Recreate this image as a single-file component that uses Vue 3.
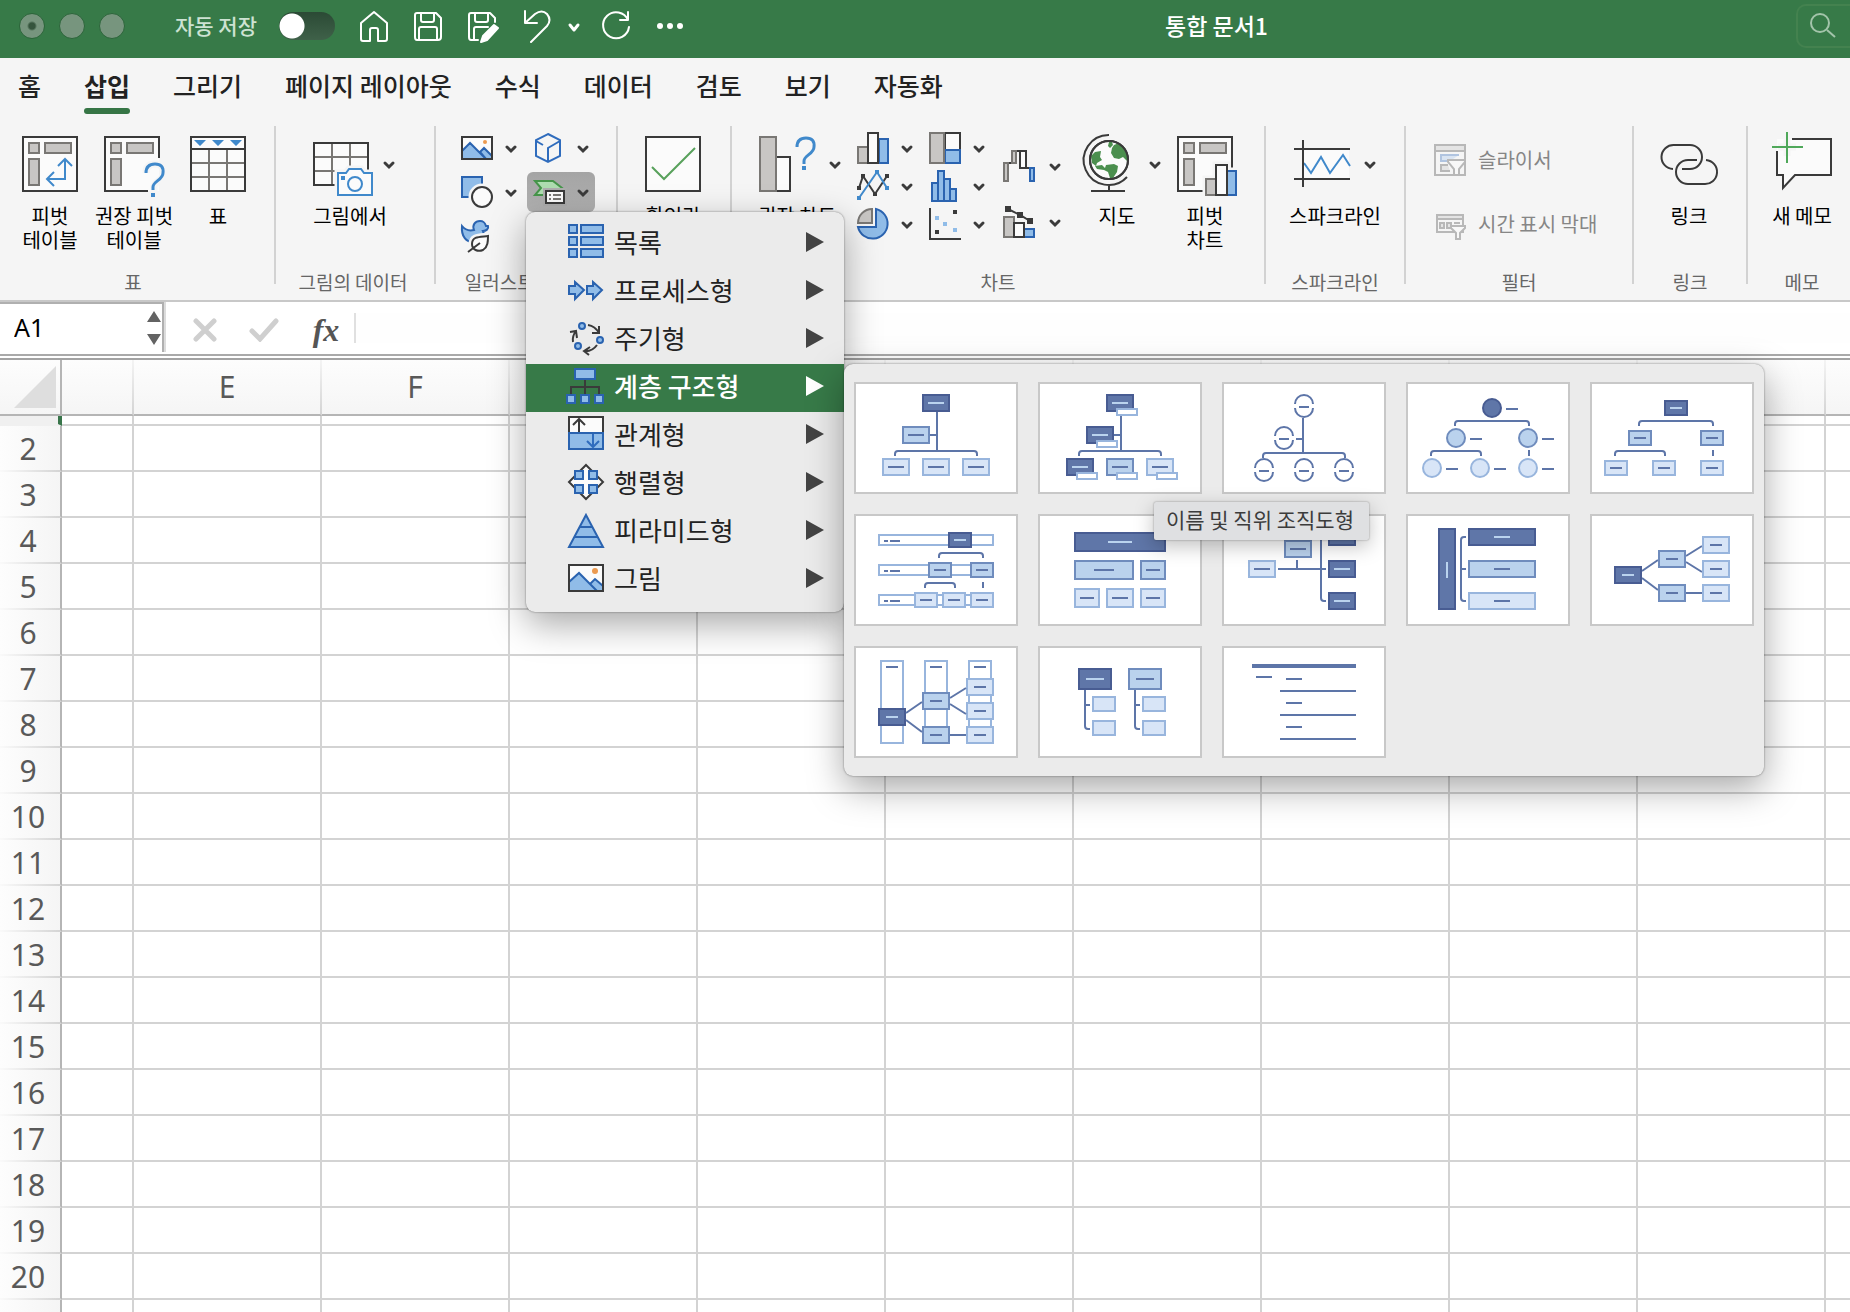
<script setup>
import { ref } from 'vue'

const autosave = ref(false)
const cellName = ref('A1')
const formula = ref('')

const tabs = ['홈', '삽입', '그리기', '페이지 레이아웃', '수식', '데이터', '검토', '보기', '자동화']
const columns = ['E', 'F', 'G', 'H', 'I', 'J', 'K', 'L', 'M', 'N']
const rows = Array.from({ length: 20 }, (_, i) => i + 2)

const menu = [
  { id: 'list', label: '목록' },
  { id: 'process', label: '프로세스형' },
  { id: 'cycle', label: '주기형' },
  { id: 'hierarchy', label: '계층 구조형', active: true },
  { id: 'relation', label: '관계형' },
  { id: 'matrix', label: '행렬형' },
  { id: 'pyramid', label: '피라미드형' },
  { id: 'picture', label: '그림' },
]

// Box: [x, y, width, height, tone, dash length]; circle: [cx, cy, tone]
const arc = (x, y) => `M${x - 9} ${y - 2}A9 9 0 0 1 ${x + 9} ${y - 2}M${x - 9} ${y + 2}A9 9 0 0 0 ${x + 9} ${y + 2}M${x - 5} ${y + 1}h10`
const bracket = (x1, x2, y) => `M${x1} ${y + 5}v-2q0-3 3-3H${x2 - 3}q3 0 3 3v2`

const layouts = [
  {
    name: '조직도형',
    lines: 'M81 28V66M74 51H81' + bracket(39, 121, 67),
    boxes: [[66, 10, 28, 18, 'd', 16], [46, 42, 28, 18, 'm', 16], [26, 74, 28, 18, 'l', 16], [66, 74, 28, 18, 'l', 16], [106, 74, 28, 18, 'l', 16]],
  },
  {
    name: '이름 및 직위 조직도형',
    lines: 'M81 28V66M74 51H81' + bracket(39, 121, 67),
    boxes: [
      [66, 10, 28, 18, 'd', 16], [46, 42, 28, 18, 'd', 16], [26, 74, 28, 18, 'd', 16], [66, 74, 28, 18, 'm', 16], [106, 74, 28, 18, 'l', 16],
      [76, 24, 22, 8, 'w', 0], [56, 56, 22, 8, 'w', 0], [36, 88, 22, 8, 'w', 0], [76, 88, 22, 8, 'w', 0], [116, 88, 22, 8, 'w', 0],
    ],
  },
  {
    name: '반원 조직도형',
    lines: 'M79 34V69M72 55H79' + bracket(39, 121, 69) + arc(80, 22) + arc(60, 54) + arc(40, 86) + arc(80, 86) + arc(120, 86),
  },
  {
    name: '원형 그림 계층 구조형',
    lines: bracket(47, 121, 37) + bracket(23, 73, 67) + 'M121 66v6M98 25h12M62 55h12M134 55h12M38 85h12M86 85h12M134 85h12',
    circles: [[84, 24, 'd'], [48, 54, 'm'], [120, 54, 'm'], [24, 84, 'l'], [72, 84, 'l'], [120, 84, 'l']],
  },
  {
    name: '계층 구조형',
    lines: bracket(47, 121, 37) + bracket(23, 73, 67) + 'M121 66v6',
    boxes: [[72, 16, 24, 16, 'd', 12], [36, 46, 24, 16, 'm', 12], [108, 46, 24, 16, 'm', 12], [12, 76, 24, 16, 'l', 12], [60, 76, 24, 16, 'l', 12], [108, 76, 24, 16, 'l', 12]],
  },
  {
    name: '레이블 계층 구조형',
    boxes: [
      [22, 18, 116, 12, 'w', 0], [22, 48, 116, 12, 'w', 0], [22, 78, 116, 12, 'w', 0],
      [92, 16, 24, 16, 'd', 12], [72, 46, 24, 16, 'm', 12], [114, 46, 24, 16, 'm', 12], [58, 76, 24, 16, 'l', 12], [86, 76, 24, 16, 'l', 12], [114, 76, 24, 16, 'l', 12],
    ],
    over: 'M28 25h4M34 25h10M28 55h4M34 55h10M28 85h4M34 85h10' + bracket(83, 127, 37) + bracket(69, 99, 67) + 'M127 66v6',
  },
  {
    name: '표 계층 구조형',
    boxes: [[34, 16, 92, 20, 'd', 24], [34, 44, 60, 20, 'm', 20], [100, 44, 26, 20, 'm', 14], [34, 72, 26, 20, 'l', 14], [66, 72, 28, 20, 'l', 16], [100, 72, 26, 20, 'l', 14]],
  },
  {
    name: '가로 조직도형',
    lines: 'M54 53H102M73 44V53M102 21h-2q-3 0-3 3V82q0 3 3 3h2',
    boxes: [[60, 24, 28, 18, 'm', 16], [24, 44, 28, 18, 'l', 16], [104, 12, 28, 18, 'd', 16], [104, 44, 28, 18, 'd', 16], [104, 76, 28, 18, 'd', 16]],
  },
  {
    name: '가로 다단계 계층 구조형',
    lines: 'M58 21h-2q-3 0-3 3V82q0 3 3 3h2M53 53h5',
    boxes: [[30, 12, 18, 82, 'd', 0], [60, 12, 68, 18, 'd', 16], [60, 44, 68, 18, 'm', 16], [60, 76, 68, 18, 'l', 16]],
    light: 'M39 46v16',
  },
  {
    name: '가로 계층 구조형',
    lines: 'M50 55L66 44M50 62L66 74M94 40L110 30M94 46L110 56M94 77H110',
    boxes: [[22, 50, 28, 18, 'd', 12], [66, 34, 28, 18, 'm', 12], [66, 68, 28, 18, 'm', 12], [110, 20, 28, 18, 'l', 12], [110, 44, 28, 18, 'l', 12], [110, 68, 28, 18, 'l', 12]],
  },
  {
    name: '가로 레이블 계층 구조형',
    boxes: [
      [24, 12, 24, 84, 'w', 0], [68, 12, 24, 84, 'w', 0], [112, 12, 24, 84, 'w', 0],
      [22, 60, 28, 18, 'd', 12], [66, 44, 28, 18, 'm', 12], [66, 78, 28, 18, 'm', 12], [110, 30, 28, 18, 'l', 12], [110, 54, 28, 18, 'l', 12], [110, 78, 28, 18, 'l', 12],
    ],
    over: 'M30 19h12M74 19h12M118 19h12M50 65L66 54M50 72L66 84M94 50L110 40M94 56L110 66M94 87H110',
  },
  {
    name: '계층 구조 목록형',
    lines: 'M45 42V78q0 3 3 3h2M45 57h5M95 42V78q0 3 3 3h2M95 57h5',
    boxes: [[38, 20, 34, 22, 'd', 18], [88, 20, 34, 22, 'm', 18], [52, 48, 24, 16, 'l', 0], [52, 72, 24, 16, 'l', 0], [102, 48, 24, 16, 'l', 0], [102, 72, 24, 16, 'l', 0]],
  },
  {
    name: '선 목록형',
    lines: 'M28 17H132M28 19H132M32 29H48M62 31H78M62 55H78M62 79H78M56 43H132M56 67H132M56 91H132',
  },
]
</script>

<template>
  <div class="window">
    <header class="titlebar">
      <div class="lights">
        <span class="light edited"></span><span class="light"></span><span class="light"></span>
      </div>
      <label class="autosave" for="autosave">자동 저장</label>
      <input id="autosave" v-model="autosave" class="toggle" type="checkbox" role="switch" />
      <nav class="quick">
        <button aria-label="홈"><svg width="32" height="34" viewBox="0 0 32 34"><path d="M3 14L16 3 29 14V30q0 2-2 2H20V21q0-2-2-2h-4q-2 0-2 2V32H5q-2 0-2-2Z" /></svg></button>
        <button aria-label="저장"><svg width="32" height="34" viewBox="0 0 32 34"><path d="M5 4H24L29 9V28q0 3-3 3H5q-2 0-2-3V6q0-2 2-2ZM9 4v7q0 2 2 2h9q2 0 2-2V4M7 31V20q0-2 2-2h14q2 0 2 2V31" /></svg></button>
        <button aria-label="다른 이름으로 저장"><svg width="34" height="34" viewBox="0 0 34 34"><path d="M12 31H5q-2 0-2-3V6q0-2 2-2H24L29 9v4M9 4v7q0 2 2 2h9q2 0 2-2V4M8 31V20q0-2 2-2h12" /><path class="solid" d="M28 16l4 3-11 12-6 2 2-6Z" /></svg></button>
        <button aria-label="실행 취소"><svg width="32" height="34" viewBox="0 0 32 34"><path d="M3 2V14H15M3 14L13 5q7-5 12 0 5 6 0 12L9 33" /></svg></button>
        <button class="narrow" aria-label="실행 취소 목록"><svg width="16" height="34" viewBox="0 0 16 34"><path class="thick" d="M4 16l4 5 4-5" /></svg></button>
        <button aria-label="다시 실행"><svg width="32" height="34" viewBox="0 0 32 34"><path d="M28 11A13 13 0 1 0 29 18M28 3V11H20" /></svg></button>
        <button aria-label="더 보기"><svg width="32" height="34" viewBox="0 0 32 34"><g class="dots"><circle cx="6" cy="17" r="3" /><circle cx="16" cy="17" r="3" /><circle cx="26" cy="17" r="3" /></g></svg></button>
      </nav>
      <h1 class="doc-title">통합 문서1</h1>
      <button class="search" aria-label="검색"><svg width="30" height="30" viewBox="0 0 30 30"><circle cx="12" cy="12" r="9" /><path d="M19 19L27 26" /></svg></button>
    </header>

    <nav class="tabs">
      <a v-for="t in tabs" :key="t" href="#" :class="{ current: t === '삽입' }">{{ t }}</a>
    </nav>

    <section class="ribbon">
      <div class="group tables">
        <div class="tools">
          <button class="big">
            <svg width="68" height="72" viewBox="0 0 68 72"><rect class="w" x="7" y="7" width="54" height="54" /><rect class="g" x="13" y="13" width="10" height="10" /><rect class="g" x="29" y="13" width="26" height="10" /><rect class="g" x="13" y="29" width="10" height="26" /><path class="bl" d="M31 49H49V29M42 36l7-7 7 7M38 42l-7 7 7 7" /></svg>
            <span>피벗<br />테이블</span>
          </button>
          <button class="big">
            <svg width="68" height="72" viewBox="0 0 68 72"><path class="fillw" d="M5 7H59V61H5Z" /><path class="k" d="M59 28V7H5V61H48" /><rect class="g" x="11" y="13" width="10" height="10" /><rect class="g" x="27" y="13" width="26" height="10" /><rect class="g" x="11" y="29" width="10" height="26" /><path class="halo" d="M46 43q0-9 9-9t9 9c0 7-10 8-10 14v9" /><path class="bl q" d="M46 43q0-9 9-9t8 9c0 7-10 8-10 14v3" /><rect class="bs" x="51" y="63" width="4" height="4" /></svg>
            <span>권장 피벗<br />테이블</span>
          </button>
          <button class="big">
            <svg width="68" height="72" viewBox="0 0 68 72"><rect class="w" x="7" y="7" width="54" height="54" /><path class="gk" d="M25 19V61M43 19V61M7 33H61M7 47H61" /><path class="k" d="M7 19H61M7 7H61V61H7Z" /><path class="bs" d="M10 10h12l-6 6ZM28 10h12l-6 6ZM46 10h12l-6 6Z" /></svg>
            <span>표</span>
          </button>
        </div>
        <p>표</p>
      </div>

      <div class="group picdata">
        <div class="tools">
          <button class="big wide">
            <svg width="92" height="72" viewBox="0 0 92 72"><path class="fillw" d="M10 13H64V55H10Z" /><path class="gk" d="M28 13V55M46 13V36M10 27H64M10 41H31" /><path class="k" d="M64 40V13H10V55H31" /><path class="halo" d="M34 43H42L45 39H57L60 43H68V65H34Z" /><path class="bl fw" d="M34 43H42L45 39H57L60 43H68V65H34Z" /><circle class="bl" cx="51" cy="54" r="7" /><rect class="bs" x="37" y="46" width="4" height="4" /><path class="chev" d="M81 33l4 4 4-4" /></svg>
            <span>그림에서</span>
          </button>
        </div>
        <p>그림의 데이터</p>
      </div>

      <div class="group illus">
        <div class="tools pairs">
          <button class="small" aria-label="그림"><svg width="68" height="40" viewBox="0 0 68 40"><rect class="w" x="7" y="9" width="30" height="22" /><path class="b" d="M7 30V23L15 15 31 31H7M25 24l4-4 8 8V31H31Z" /><rect class="k" x="7" y="9" width="30" height="22" /><circle class="sun" cx="30" cy="14" r="2" /><path class="chev" d="M52 19l4 4 4-4" /></svg></button>
          <button class="small" aria-label="3D 모델"><svg width="68" height="40" viewBox="0 0 68 40"><path class="cube" d="M21 6L33 12V28L21 34 9 28V12ZM9 13l7 4M21 34V20L33 13" /><path class="chev" d="M52 19l4 4 4-4" /></svg></button>
          <button class="small" aria-label="도형"><svg width="68" height="40" viewBox="0 0 68 40"><rect class="b" x="7" y="5" width="20" height="20" /><circle class="halo" cx="27" cy="25" r="10" /><circle class="w" cx="27" cy="25" r="10" /><path class="chev" d="M52 19l4 4 4-4" /></svg></button>
          <button class="small pressed" aria-label="SmartArt" aria-expanded="true"><svg width="68" height="40" viewBox="0 0 68 40"><path class="green" d="M8 9H26L35 16 30 23H8L14 16Z" /><rect class="card-gap" x="16" y="16" width="24" height="18" /><rect class="w" x="19" y="19" width="18" height="12" /><path class="gk" d="M22 23h2M26 23h8M22 27h2M26 27h8" /><path class="chev" d="M52 19l4 4 4-4" /></svg></button>
          <button class="small" aria-label="아이콘"><svg width="68" height="40" viewBox="0 0 68 40"><path class="b" d="M7 10c4 5 8 5 12 4-2-5 1-9 6-9 4 0 5 2 6 5h2c1 3-2 5-5 5 2 4-1 10-8 11-9 1-14-6-13-16Z" /><path class="halo" d="M33 20C25 21 17 20 17 28c0 6 6 8 11 6 5-3 5-9 5-14Z" /><path class="w" d="M33 20C25 21 17 20 17 28c0 6 6 8 11 6 5-3 5-9 5-14ZM13 36L25 27" /></svg></button>
        </div>
        <p>일러스트레이션</p>
      </div>

      <div class="group controls">
        <div class="tools">
          <button class="big">
            <svg width="68" height="72" viewBox="0 0 68 72"><rect class="w" x="7" y="7" width="54" height="54" /><path class="gl" d="M13 37L25 49 56 18" /></svg>
            <span>확인란</span>
          </button>
        </div>
      </div>

      <div class="group charts">
        <div class="tools">
          <button class="big wide">
            <svg width="92" height="72" viewBox="0 0 92 72"><rect class="w" x="25" y="27" width="14" height="34" /><rect class="g" x="9" y="7" width="16" height="54" /><path class="bl q" d="M46 17q0-9 9-9t8 9c0 7-10 8-10 14v3" /><rect class="bs" x="51" y="36" width="4" height="4" /><path class="chev" d="M80 33l4 4 4-4" /></svg>
            <span>권장 차트</span>
          </button>
          <div class="stack">
            <button aria-label="세로 막대형"><svg width="72" height="38" viewBox="0 0 72 38"><rect class="g" x="9" y="18" width="10" height="16" /><rect class="b" x="30" y="10" width="9" height="24" /><rect class="w" x="19" y="4" width="10" height="30" /><path class="chev" d="M54 18l4 4 4-4" /></svg></button>
            <button aria-label="꺾은선형"><svg width="72" height="38" viewBox="0 0 72 38"><path class="k" d="M10 21L14 9 26 27 38 9" /><path class="dk" d="M8 19h4v4H8ZM12 7h4v4h-4ZM24 25h4v4h-4ZM36 7h4v4h-4Z" /><path class="bl" d="M10 31L28 5 38 21" /><path class="bs" d="M8 29h4v4H8ZM26 3h4v4h-4ZM36 19h4v4h-4Z" /><path class="chev" d="M54 18l4 4 4-4" /></svg></button>
            <button aria-label="원형"><svg width="72" height="38" viewBox="0 0 72 38"><path class="b" d="M27 4A15 15 0 1 1 9 22H27Z" /><path class="g" d="M23 4V18H9A14 14 0 0 1 23 4Z" /><path class="chev" d="M54 18l4 4 4-4" /></svg></button>
          </div>
          <div class="stack">
            <button aria-label="계층 구조"><svg width="72" height="38" viewBox="0 0 72 38"><rect class="w" x="24" y="4" width="15" height="17" /><rect class="b" x="24" y="21" width="15" height="13" /><rect class="g" x="9" y="4" width="14" height="30" /><path class="chev" d="M54 18l4 4 4-4" /></svg></button>
            <button aria-label="통계"><svg width="72" height="38" viewBox="0 0 72 38"><path class="b" d="M11 34V16h6V34ZM17 34V4h6V34ZM23 34V12h6V34ZM29 34V22h6V34Z" /><path class="chev" d="M54 18l4 4 4-4" /></svg></button>
            <button aria-label="분산형"><svg width="72" height="38" viewBox="0 0 72 38"><path class="k" d="M9 3V34H40" /><path class="dk" d="M32 5h4v4h-4ZM14 25h4v4h-4Z" /><path class="lb" d="M14 11h4v4h-4ZM22 17h4v4h-4ZM32 23h4v4h-4Z" /><path class="chev" d="M54 18l4 4 4-4" /></svg></button>
          </div>
          <div class="stack loose">
            <button aria-label="폭포"><svg width="72" height="38" viewBox="0 0 72 38"><path class="k" d="M15 16h4M23 4h4M33 21h4" /><path class="g" d="M11 16h4V34h-4ZM19 4h4V16h-4Z" /><rect class="w" x="27" y="4" width="6" height="17" /><rect class="b" x="37" y="21" width="4" height="13" /><path class="chev" d="M58 18l4 4 4-4" /></svg></button>
            <button aria-label="콤보"><svg width="72" height="38" viewBox="0 0 72 38"><rect class="b" x="31" y="26" width="10" height="8" /><rect class="g" x="11" y="14" width="10" height="20" /><rect class="w" x="21" y="20" width="10" height="14" /><path class="k" d="M15 6L27 12 37 18" /><path class="dk" d="M12 3h6v6h-6ZM24 9h6v6h-6ZM34 15h6v6h-6Z" /><path class="chev" d="M58 18l4 4 4-4" /></svg></button>
          </div>
          <button class="big wide globe">
            <svg width="92" height="72" viewBox="0 0 92 72"><circle class="w" cx="38" cy="30" r="19" /><path class="land" d="M43 15l5-2 6 5 3 8-1 5-4-4-4 2-5-1-3-5 1-5ZM38 12h3l1 3-3 3-2-2ZM20 26l4-4 6-1-1 6 2 3-5 3-1 3-4-3ZM24 36l7-1 3 3 1-3 8-1 4 2-1 6-4 6-3 0-2-6-4-2-7-1Z" /><circle class="k" cx="38" cy="30" r="19" /><path class="k" d="M38 5A25 25 0 1 0 56 47M38 55V61M20 61H54" /><path class="chev" d="M80 33l4 4 4-4" /></svg>
            <span>지도</span>
          </button>
          <button class="big pchart">
            <svg width="68" height="72" viewBox="0 0 68 72"><path class="fillw" d="M7 7H61V61H7Z" /><path class="k" d="M61 38V7H7V61H32" /><rect class="g" x="13" y="13" width="10" height="10" /><rect class="g" x="29" y="13" width="26" height="10" /><rect class="g" x="13" y="29" width="10" height="26" /><path class="halo" d="M35 65V49H45V35H56V41H65V65Z" /><rect class="g" x="35" y="49" width="10" height="16" /><rect class="b" x="56" y="41" width="9" height="24" /><rect class="w" x="45" y="35" width="11" height="30" /></svg>
            <span>피벗<br />차트</span>
          </button>
        </div>
        <p>차트</p>
      </div>

      <div class="group spark">
        <div class="tools">
          <button class="big wide">
            <svg width="92" height="72" viewBox="0 0 92 72"><path class="fillw" d="M14 19H60V49H14Z" /><path class="bl" d="M15 33l7 10 10-16 9 16L54 25l7 11" /><path class="k" d="M14 10V57M5 19H61M5 49H61" /><path class="chev" d="M77 33l4 4 4-4" /></svg>
            <span>스파크라인</span>
          </button>
        </div>
        <p>스파크라인</p>
      </div>

      <div class="group filter">
        <div class="tools column">
          <button class="row" disabled><svg width="32" height="32" viewBox="0 0 32 32"><path class="dis" d="M1 1H31V31H1Z" /><path class="disf" d="M1 1H31V7H1Z" /><path class="disb" d="M25 11H7V17H16" /><path class="disf" d="M14 21H7V27H16" /><path class="disw" d="M14 16H31V18L25 25V31H20V25L14 18Z" /></svg><span>슬라이서</span></button>
          <button class="row" disabled><svg width="32" height="32" viewBox="0 0 32 32"><path class="dis" d="M3 7H29V24H3Z" /><path class="disf" d="M3 7H29V11H3Z" /><path class="disf" d="M6 15H10V20H6ZM13 15H17V20H13ZM20 15H26" /><path class="disw" d="M17 18H31V20L26 25V31H22V25L17 20Z" /></svg><span>시간 표시 막대</span></button>
        </div>
        <p>필터</p>
      </div>

      <div class="group link">
        <div class="tools">
          <button class="big">
            <svg width="68" height="72" viewBox="0 0 68 72"><path class="k" d="M18 39A12 12 0 0 1 19 15H35A12 12 0 0 1 35 39H27M42 30H33A12 12 0 0 0 33 54H49A12 12 0 0 0 51 30" /></svg>
            <span>링크</span>
          </button>
        </div>
        <p>링크</p>
      </div>

      <div class="group memo">
        <div class="tools">
          <button class="big">
            <svg width="68" height="72" viewBox="0 0 68 72"><path class="fillw" d="M9 9H63V45H27L15 58V45H9Z" /><path class="k" d="M24 9H63V45H27L15 58V45H9V21" /><path class="halo" d="M19 9V26M10 17H28" /><path class="plus" d="M19 2V33M4 17H35" /></svg>
            <span>새 메모</span>
          </button>
        </div>
        <p>메모</p>
      </div>
    </section>

    <section class="formula-bar">
      <div class="namebox">
        <input v-model="cellName" aria-label="이름 상자" />
        <button aria-label="이름 목록"><svg width="14" height="36" viewBox="0 0 14 36"><path d="M0 12L7 1l7 11ZM0 24H14L7 35Z" /></svg></button>
      </div>
      <button aria-label="취소"><svg width="24" height="24" viewBox="0 0 24 24"><path d="M3 3L21 21M21 3L3 21" /></svg></button>
      <button aria-label="입력"><svg width="30" height="24" viewBox="0 0 30 24"><path d="M3 13L11 21 27 3" /></svg></button>
      <button class="fx" aria-label="함수 삽입">fx</button>
      <input v-model="formula" class="formula" aria-label="수식 입력줄" />
    </section>

    <table class="sheet">
      <colgroup>
        <col class="c-head" /><col class="c-part" /><col v-for="c in columns" :key="c" />
      </colgroup>
      <thead>
        <tr>
          <th class="corner"><svg width="42" height="42" viewBox="0 0 42 42"><path d="M42 0V42H0Z" /></svg></th>
          <th></th>
          <th v-for="c in columns" :key="c" scope="col">{{ c }}</th>
        </tr>
      </thead>
      <tbody>
        <tr class="first"><th></th><td></td><td v-for="c in columns" :key="c"></td></tr>
        <tr v-for="r in rows" :key="r"><th scope="row">{{ r }}</th><td></td><td v-for="c in columns" :key="c"></td></tr>
      </tbody>
    </table>

    <div class="menu" role="menu">
      <button v-for="m in menu" :key="m.id" role="menuitem" :class="{ active: m.active }">
        <svg width="40" height="44" viewBox="0 -4 40 44">
          <path v-if="m.id === 'list'" class="b" d="M3 1h8v8H3ZM15 1H37V9H15ZM3 13h8v8H3ZM15 13H37v8H15ZM3 25h8v8H3ZM15 25H37v8H15Z" />
          <path v-if="m.id === 'process'" class="b" d="M3 14H9V10l9 8-9 9V22H3ZM21 14h6V10l9 8-9 9V22H21Z" />
          <g v-if="m.id === 'cycle'"><circle class="b" cx="16" cy="6" r="3" /><circle class="b" cx="34" cy="20" r="3" /><circle class="b" cx="12" cy="26" r="3" /><path class="k" d="M22 5q7 1 11 8M26 13h7V6M31 25q-5 7-13 6M24 27l-6 4 5 4M7 22q-1-6 3-11M4 12l6-1 1 7" /></g>
          <g v-if="m.id === 'hierarchy'"><path class="k" d="M19 12V26M5 26V19H33V26" /><path class="b" d="M9 1H29V11H9ZM1 27H9v8H1ZM15 27h8v8H15ZM29 27h8v8H29Z" /></g>
          <g v-if="m.id === 'relation'"><rect class="w" x="3" y="1" width="34" height="17" /><rect class="b" x="3" y="17" width="34" height="16" /><path class="k" d="M13 16V3M7 9l6-6 6 6" /><path class="cube" d="M27 18V31M21 25l6 6 6-6" /></g>
          <g v-if="m.id === 'matrix'"><path class="w" d="M20 1L37 18 20 35 3 18Z" /><path class="b" d="M9 7h8v8H9ZM23 7h8v8H23ZM9 21h8v8H9ZM23 21h8v8H23Z" /></g>
          <path v-if="m.id === 'pyramid'" class="b" d="M20 3L37 35H3ZM14 15H26M9 25H31" />
          <g v-if="m.id === 'picture'"><rect class="w" x="3" y="5" width="34" height="26" /><path class="b" d="M3 31V22L13 13 31 31ZM24 24l5-5 8 7V31H31Z" /><rect class="k" x="3" y="5" width="34" height="26" /><circle class="sun" cx="29" cy="11" r="3" /></g>
        </svg>
        <span>{{ m.label }}</span>
        <svg class="arrow" width="18" height="20" viewBox="0 0 18 20"><path d="M0 0L18 10 0 20Z" /></svg>
      </button>
    </div>

    <div class="gallery">
      <button v-for="l in layouts" :key="l.name" :aria-label="l.name">
        <svg width="160" height="108" viewBox="0 0 160 108">
          <path v-if="l.lines" class="conn" :d="l.lines" />
          <g v-for="(b, i) in l.boxes || []" :key="i" :class="'t-' + b[4]">
            <rect :x="b[0] + 1" :y="b[1] + 1" :width="b[2] - 2" :height="b[3] - 2" />
            <path v-if="b[5]" :d="`M${b[0] + (b[2] - b[5]) / 2} ${b[1] + b[3] / 2}h${b[5]}`" />
          </g>
          <g v-for="(c, i) in l.circles || []" :key="'c' + i" :class="'t-' + c[2]"><circle :cx="c[0]" :cy="c[1]" r="9" /></g>
          <path v-if="l.over" class="conn" :d="l.over" />
          <path v-if="l.light" class="conn light-line" :d="l.light" />
        </svg>
      </button>
    </div>

    <div class="tooltip" role="tooltip">이름 및 직위 조직도형</div>
  </div>
</template>

<style>
body {
  margin: 0;
  background: #fff;
}
</style>

<style scoped>
.window {
  position: relative;
  height: 100vh;
  overflow: hidden;
  font-family: 'Noto Sans CJK KR', 'Noto Sans', sans-serif;
  color: #222;
}
.window * {
  box-sizing: border-box;
}
button {
  margin: 0;
  padding: 0;
  border: 0;
  background: none;
  font: inherit;
  color: inherit;
}
svg {
  display: block;
  flex: none;
  fill: none;
}
input {
  font: inherit;
  border: 0;
  outline: 0;
}

/* Title bar */
.titlebar {
  display: flex;
  align-items: center;
  height: 58px;
  padding: 0 0 6px 19px;
  background: #377a48;
  color: #fff;
}
.lights {
  display: flex;
  gap: 14px;
}
.light {
  width: 26px;
  height: 26px;
  border: 1px solid #2c653a;
  border-radius: 50%;
  background: #77957e;
}
.edited {
  background: radial-gradient(circle, #35553d 3px, #77957e 5px);
}
.autosave {
  margin-left: 50px;
  padding-bottom: 3px;
  font-size: 21px;
  line-height: 30px;
  font-weight: 500;
  color: #cde2d2;
}
.toggle {
  appearance: none;
  width: 56px;
  height: 28px;
  margin: 0 0 0 22px;
  border-radius: 14px;
  background: radial-gradient(circle at 13px 14px, #fff 12px, transparent 13px), linear-gradient(#2b4a35, #3f6149);
}
.quick {
  display: flex;
  gap: 22px;
  margin-left: 23px;
}
.quick svg {
  stroke: #fff;
  stroke-width: 2;
  stroke-linejoin: round;
  stroke-linecap: round;
}
.quick .narrow {
  margin: 0 -4px 0 -10px;
}
.quick .thick {
  stroke-width: 3;
}
.quick .solid,
.dots {
  fill: #fff;
}
.dots {
  stroke: none;
}
.doc-title {
  margin: 0 0 0 479px;
  padding-bottom: 3px;
  font-size: 23px;
  line-height: 30px;
  font-weight: 500;
}
.search {
  width: 54px;
  height: 44px;
  margin-left: auto;
  padding-left: 10px;
  border: 2px solid #44824f;
  border-right: 0;
  border-radius: 10px 0 0 10px;
}
.search svg {
  stroke: #a3c4aa;
  stroke-width: 2;
}

/* Tabs */
.tabs {
  display: flex;
  gap: 43px;
  height: 62px;
  padding: 9px 18px 0;
  background: #f5f5f5;
  font-size: 25px;
  line-height: 36px;
  white-space: nowrap;
}
.tabs a {
  height: 47px;
  color: #222;
  font-weight: 500;
  text-decoration: none;
}
.tabs .current {
  position: relative;
  font-weight: 700;
}
.tabs .current::after {
  content: '';
  position: absolute;
  left: 0;
  right: 0;
  bottom: 0;
  height: 6px;
  border-radius: 3px;
  background: #367545;
}

/* Ribbon */
.ribbon {
  display: flex;
  height: 182px;
  padding: 6px 0 16px;
  border-bottom: 2px solid #c8c8c8;
  background: #f5f5f5;
  overflow: hidden;
  color: #000;
}
.group {
  display: flex;
  flex: none;
  flex-direction: column;
  justify-content: space-between;
  border-right: 2px solid #d2d2d2;
}
.group:last-child {
  border-right: 0;
}
.group p {
  margin: 0 0 -10px;
  font-size: 19px;
  line-height: 24px;
  text-align: center;
  color: #666;
}
.tools {
  display: flex;
  justify-content: center;
}
.tables {
  width: 276px;
}
.tables .tools {
  padding-right: 6px;
}
.tables p {
  padding-right: 8px;
}
.picdata {
  width: 160px;
}
.picdata .tools {
  padding-right: 10px;
}
.picdata p {
  padding-right: 4px;
}
.illus {
  width: 182px;
}
.controls {
  width: 114px;
}
.controls .tools,
.link .tools {
  padding-right: 2px;
}
.charts {
  width: 534px;
}
.charts .tools {
  justify-content: flex-start;
  padding-left: 19px;
}
.charts .stack:nth-child(2),
.charts .globe {
  margin-left: 6px;
}
.charts .pchart {
  margin-left: 4px;
}
.spark {
  width: 140px;
}
.filter {
  width: 228px;
}
.link {
  width: 114px;
}
.memo {
  width: 108px;
}
.big {
  display: flex;
  flex-direction: column;
  align-items: center;
  gap: 2px;
  width: 84px;
  padding-top: 4px;
  font-size: 20px;
  line-height: 24px;
  white-space: nowrap;
}
.big.wide {
  width: 92px;
}
.big.pchart {
  width: 76px;
}
.pairs {
  display: grid;
  grid-template-columns: 68px 68px;
  gap: 4px;
  padding: 2px 2px 0 0;
}
.small {
  height: 40px;
  border-radius: 6px;
}
.pressed {
  background: linear-gradient(#a4a4a4, #b2b2b2);
}
.stack {
  display: flex;
  flex-direction: column;
  padding-top: 3px;
}
.loose {
  gap: 18px;
  padding-top: 21px;
}
.column {
  flex-direction: column;
  gap: 32px;
  padding: 18px 0 0 28px;
}
.row {
  display: flex;
  align-items: center;
  gap: 12px;
  height: 32px;
  font-size: 20px;
  line-height: 24px;
  color: #868686;
  white-space: nowrap;
}

/* Icon paint */
.k,
.w {
  stroke: #3a3a3a;
  stroke-width: 2;
}
.w,
.fillw,
.fw {
  fill: #fbfbfb;
}
.dk {
  fill: #3a3a3a;
}
.g {
  fill: #c8c6c4;
  stroke: #797774;
  stroke-width: 2;
}
.gk {
  stroke: #797774;
  stroke-width: 2;
}
.b {
  fill: #90bce8;
  stroke: #2a63b0;
  stroke-width: 2;
}
.bl {
  stroke: #4089cb;
  stroke-width: 2;
}
.q {
  stroke-width: 3;
}
.bs {
  fill: #4089cb;
}
.lb {
  fill: #90bce8;
}
.cube {
  stroke: #2f6cbd;
  stroke-width: 2;
}
.gl {
  stroke: #58a15b;
  stroke-width: 2;
}
.plus {
  stroke: #4fa85a;
  stroke-width: 2;
}
.green {
  fill: #aedcb0;
  stroke: #46954a;
  stroke-width: 2;
}
.card-gap {
  fill: #acacac;
}
.land {
  fill: #4b8f4e;
}
.sun {
  fill: #eb9a50;
}
.halo {
  stroke: #f5f5f5;
  stroke-width: 7;
}
.chev {
  stroke: #3b3b3b;
  stroke-width: 3;
  stroke-linecap: round;
}
.dis,
.disf,
.disw {
  stroke: #b8b8b8;
  stroke-width: 2;
}
.disf {
  fill: #e4e4e4;
}
.disw {
  fill: #f8f8f8;
}
.disb {
  fill: #d9e4f2;
  stroke: #b0c4e0;
  stroke-width: 2;
}

/* Formula bar */
.formula-bar {
  display: flex;
  align-items: center;
  height: 54px;
  border-bottom: 2px solid #a9a9a9;
  background: #fff;
}
.namebox {
  display: flex;
  align-items: center;
  align-self: flex-start;
  width: 164px;
  height: 50px;
  margin-right: 29px;
  border: 2px solid #b0b0b0;
  border-width: 2px 2px 0 0;
  box-shadow: 2px 0 #dcdcdc;
}
.namebox input {
  width: 147px;
  padding: 0 0 2px 14px;
  background: none;
  font-family: 'Noto Sans', sans-serif;
  font-size: 25px;
  line-height: 32px;
  color: #000;
}
.namebox path {
  fill: #636363;
}
.formula-bar > button {
  padding-top: 4px;
}
.formula-bar > button > svg {
  stroke: #cfcfcf;
  stroke-width: 5;
  stroke-linecap: round;
}
.formula-bar > button + button {
  margin-left: 32px;
}
.fx {
  width: 30px;
  font: italic 700 32px/40px 'Liberation Serif', serif;
  color: #555;
}
.formula {
  flex: 1;
  height: 30px;
  margin-left: 13px;
  border-left: 2px solid #e0e0e0;
  background: #fefefe;
}

/* Sheet */
.sheet {
  width: 2014px;
  margin-top: 2px;
  border-top: 2px solid #a2a2a2;
  border-spacing: 0;
  table-layout: fixed;
  font-family: 'Noto Sans', sans-serif;
  font-size: 30px;
  line-height: 40px;
  background: #fff;
}
.sheet col {
  width: 188px;
}
.sheet .c-head {
  width: 62px;
}
.sheet .c-part {
  width: 72px;
}
.sheet th,
.sheet td {
  height: 46px;
  padding: 0;
  border-right: 2px solid #d3d3d3;
  border-bottom: 2px solid #d3d3d3;
}
.sheet th {
  font-weight: 400;
  color: #595959;
}
.sheet thead th {
  height: 56px;
  border-right-color: transparent;
  border-bottom-color: #b5b5b5;
  background:
    linear-gradient(#f4f4f4, #d3d3d3) right / 2px 100% no-repeat border-box,
    linear-gradient(#fdfdfd, #f5f5f5) border-box;
}
.sheet thead .corner,
.sheet tbody th {
  border-right-color: #b5b5b5;
}
.sheet .corner svg {
  margin-left: 14px;
  fill: #dedede;
}
.sheet tbody th {
  padding: 2px 4px 0 0;
  border-bottom-color: transparent;
  background:
    linear-gradient(90deg, #fafafa, #d3d3d3) bottom / 100% 2px no-repeat border-box,
    linear-gradient(90deg, #fdfdfd, #f5f5f5) border-box;
}
.sheet .first th,
.sheet .first td {
  height: 10px;
}
.sheet tbody .first th {
  border-right: 4px solid #38754a;
  background: #f0f0f0;
}

/* SmartArt menu */
.menu {
  position: absolute;
  left: 526px;
  top: 212px;
  display: flex;
  flex-direction: column;
  width: 318px;
  padding: 8px 0;
  border-radius: 9px;
  background: #ebebeb;
  box-shadow: 0 0 2px rgba(0, 0, 0, 0.5), 0 12px 36px rgba(0, 0, 0, 0.35);
}
.menu button {
  display: flex;
  align-items: center;
  height: 48px;
  padding: 0 20px 4px 40px;
  font-size: 26px;
  line-height: 36px;
  text-align: left;
}
.menu span {
  flex: 1;
  padding-left: 8px;
}
.menu .arrow {
  fill: #434343;
}
.menu .active {
  background: #377a48;
  color: #fff;
  font-weight: 500;
}
.menu .active .arrow {
  fill: #fff;
}

/* Layout gallery */
.gallery {
  position: absolute;
  left: 844px;
  top: 364px;
  display: grid;
  grid-template-columns: repeat(5, 164px);
  gap: 20px;
  padding: 18px 10px;
  border-radius: 9px;
  background: #ebebeb;
  box-shadow: 0 0 2px rgba(0, 0, 0, 0.5), 0 12px 36px rgba(0, 0, 0, 0.35);
}
.gallery button {
  border: 2px solid #c8c8c8;
  background: #fff;
}
.gallery svg {
  stroke-width: 2;
}
.conn {
  stroke: #5d75a8;
}
.light-line {
  stroke: #bad3ee;
}
.t-d {
  fill: #5f76a8;
  stroke: #485c92;
}
.t-d path {
  stroke: #bad3ee;
}
.t-m {
  fill: #bad2ed;
  stroke: #6f8cbd;
}
.t-l {
  fill: #d8e5f7;
  stroke: #98b5dd;
}
.t-m path,
.t-l path {
  stroke: #5d75a8;
}
.t-w {
  fill: #fff;
  stroke: #98b5dd;
}

.tooltip {
  position: absolute;
  left: 1154px;
  top: 502px;
  padding: 2px 15px 6px 12px;
  border-radius: 2px;
  background: #dfe0e2;
  box-shadow: 0 0 2px rgba(0, 0, 0, 0.4), 0 6px 20px rgba(0, 0, 0, 0.25);
  font-size: 21px;
  line-height: 30px;
  white-space: nowrap;
  color: #3c3c3c;
}
</style>
